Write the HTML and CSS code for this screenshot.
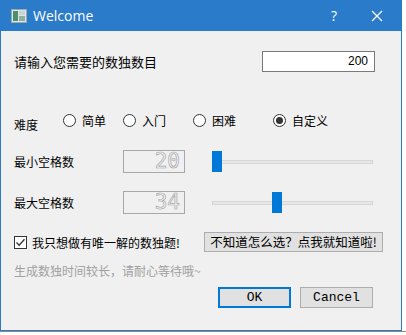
FILE: index.html
```html
<html>
    <head>
        <title>Welcome</title>
        <link rel="stylesheet" href="styles.css">
    </head>
    <body>
        <div class="window">
            <div class="titlebar">
                <svg class="appicon" width="16" height="14" viewBox="0 0 16 14">
                    <rect x="0.5" y="0.5" width="15" height="13" fill="#dfe6ea" stroke="#9aa7ad"/>
                    <rect x="2" y="2" width="5" height="10" fill="#4d8f6a"/>
                    <rect x="8" y="2" width="6" height="4" fill="#c9d3d8"/>
                    <rect x="8" y="7" width="6" height="5" fill="#8fb0a0"/>
                </svg>
                <span class="title">Welcome</span>
                <span class="help">?</span>
                <svg class="close" width="12" height="12" viewBox="0 0 12 12">
                    <path d="M1 1 L11 11 M11 1 L1 11" stroke="#fff" stroke-width="1.3"/>
                </svg>
            </div>

            <div class="content">
                <div class="row count">
                    <span class="label">请输入您需要的数独数目</span>
                    <div class="spin">200</div>
                </div>

                <div class="row level">
                    <span class="label low">难度</span>
                    <label class="radio r1"><span class="dot"></span>简单</label>
                    <label class="radio r2"><span class="dot"></span>入门</label>
                    <label class="radio r3"><span class="dot"></span>困难</label>
                    <label class="radio r4"><span class="dot on"></span>自定义</label>
                </div>

                <div class="row blanks first">
                    <span class="label name">最小空格数</span>
                    <div class="lcd">20</div>
                    <div class="slider">
                        <div class="track"></div>
                        <div class="handle" style="left: 0px"></div>
                    </div>
                </div>

                <div class="row blanks">
                    <span class="label name">最大空格数</span>
                    <div class="lcd">34</div>
                    <div class="slider">
                        <div class="track"></div>
                        <div class="handle" style="left: 60px"></div>
                    </div>
                </div>

                <div class="row unique">
                    <label class="check">
                        <svg class="box" width="13" height="13" viewBox="0 0 13 13">
                            <rect x="0.5" y="0.5" width="12" height="12" fill="#fff" stroke="#333"/>
                            <path d="M2.5 6.5 L5.2 9.3 L10.5 3.2" fill="none" stroke="#333" stroke-width="1.3"/>
                        </svg>
                        我只想做有唯一解的数独题!
                    </label>
                    <button type="button" class="hint">不知道怎么选？点我就知道啦!</button>
                </div>

                <div class="row note">生成数独时间较长，请耐心等待哦~</div>

                <div class="row actions">
                    <button type="button" class="btn default">OK</button>
                    <button type="button" class="btn">Cancel</button>
                </div>
            </div>
        </div>
        <div class="behind"></div>
    </body>
</html>
```

FILE: styles.css
```css
body {
    margin: 0;
    background-color: #fff;
    font-family: "Noto Sans CJK SC", "Noto Sans", sans-serif;
    font-size: 12px;
    color: #000;
    overflow: hidden;
}

.window {
    width: 402px;
    height: 331px;
    box-sizing: border-box;
    border: 1px solid #2b79c9;
    border-top: none;
    background-color: #f0f0f0;
}

.titlebar {
    height: 31px;
    background-color: #2b7bcb;
    display: flex;
    align-items: center;
    color: #fff;
    margin: 0 -1px;
}

.appicon {
    margin-left: 11px;
    margin-top: 1px;
}

.title {
    margin-left: 6px;
    font-family: "Open Sans", "Noto Sans", sans-serif;
    font-size: 14px;
    flex: 1;
}

.help {
    font-family: "Open Sans", sans-serif;
    font-size: 14px;
    margin-right: 34px;
}

.close {
    margin-right: 19px;
}

.content {
    padding-left: 13px;
}

.row {
    display: flex;
    align-items: center;
}

.label {
    white-space: nowrap;
}

.count {
    margin-top: 20px;
    height: 21px;
    font-size: 13px;
}

.count .label {
    width: 248px;
}

.spin {
    width: 113px;
    height: 21px;
    box-sizing: border-box;
    border: 1px solid #7a7a7a;
    background-color: #fff;
    text-align: right;
    padding-right: 6px;
    font-family: "Liberation Sans", sans-serif;
    font-size: 12px;
    line-height: 19px;
}

.level {
    margin-top: 38px;
    height: 20px;
}

.low {
    position: relative;
    top: 4px;
    width: 49px;
}

.radio {
    display: flex;
    align-items: center;
    white-space: nowrap;
}

.r1 { width: 60px; }
.r2 { width: 70px; }
.r3 { width: 80px; }

.dot {
    width: 13px;
    height: 13px;
    box-sizing: border-box;
    border: 1px solid #333;
    border-radius: 50%;
    background-color: #fff;
    margin-right: 6px;
    display: flex;
    align-items: center;
    justify-content: center;
}

.dot.on::after {
    content: "";
    width: 7px;
    height: 7px;
    border-radius: 50%;
    background-color: #333;
}

.blanks {
    margin-top: 18px;
    height: 23px;
}

.blanks.first {
    margin-top: 20px;
}

.name {
    width: 109px;
}

.lcd {
    width: 62px;
    height: 23px;
    box-sizing: border-box;
    border: 1px solid #a8a8a8;
    font-family: "DejaVu Sans Mono", monospace;
    font-size: 21px;
    font-weight: normal;
    line-height: 21px;
    text-align: right;
    padding-right: 4px;
    color: #f0f0f0;
    -webkit-text-stroke: 0.7px #a8a8a8;
    transform-origin: right;
}

.slider {
    position: relative;
    margin-left: 27px;
    width: 161px;
    height: 21px;
    display: flex;
    align-items: center;
}

.track {
    width: 100%;
    height: 4px;
    box-sizing: border-box;
    border: 1px solid #d6d6d6;
    background-color: #e7e7e7;
}

.handle {
    position: absolute;
    top: 0;
    width: 10px;
    height: 21px;
    background-color: #0078d7;
}

.unique {
    margin-top: 18px;
    height: 20px;
}

.check {
    display: flex;
    align-items: center;
    width: 190px;
    white-space: nowrap;
}

.box {
    margin-right: 5px;
}

.hint {
    height: 20px;
    width: 179px;
    padding: 0;
    border: 1px solid #adadad;
    background-color: #e1e1e1;
    font-family: "Noto Sans CJK SC", sans-serif;
    font-size: 12.5px;
    line-height: 18px;
    color: #000;
}

.note {
    margin-top: 9px;
    height: 18px;
    color: #a0a0a0;
}

.actions {
    margin-top: 8px;
    padding-left: 204px;
}

.btn {
    width: 73px;
    height: 21px;
    margin-right: 9px;
    padding: 0;
    border: 1px solid #adadad;
    background-color: #e1e1e1;
    font-family: "Liberation Mono", monospace;
    font-size: 13px;
    color: #000;
}

.btn.default {
    border: 2px solid #0078d7;
}

.behind {
    height: 4px;
    background-color: #fff;
    border-top: 1px solid #8a8a8a;
}
```
